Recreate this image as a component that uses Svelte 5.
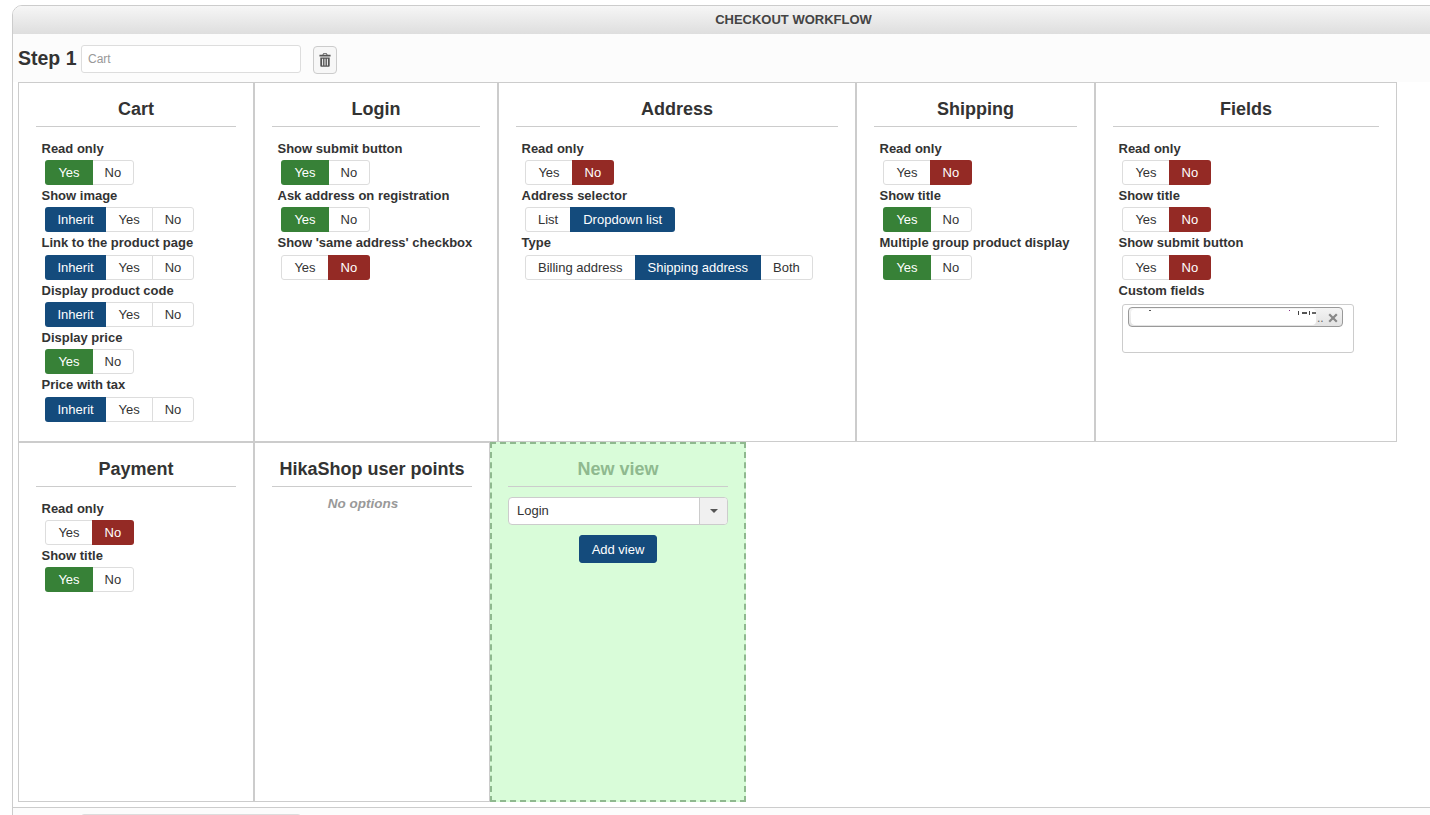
<script lang="ts">
  type Option = { label: string; tone?: "green" | "blue" | "red" };
  type Setting = { label: string; options: Option[] };
  type View = { title: string; width: number; settings?: Setting[]; chip?: boolean; empty?: boolean };

  const yes: Option = { label: "Yes", tone: "green" };
  const no: Option = { label: "No", tone: "red" };
  const plainYes: Option = { label: "Yes" };
  const plainNo: Option = { label: "No" };
  const inherit: Option = { label: "Inherit", tone: "blue" };

  const on = [yes, plainNo];
  const off = [plainYes, no];
  const inherited = [inherit, plainYes, plainNo];

  const views: View[] = [
    {
      title: "Cart",
      width: 236,
      settings: [
        { label: "Read only", options: on },
        { label: "Show image", options: inherited },
        { label: "Link to the product page", options: inherited },
        { label: "Display product code", options: inherited },
        { label: "Display price", options: on },
        { label: "Price with tax", options: inherited },
      ],
    },
    {
      title: "Login",
      width: 244,
      settings: [
        { label: "Show submit button", options: on },
        { label: "Ask address on registration", options: on },
        { label: "Show 'same address' checkbox", options: off },
      ],
    },
    {
      title: "Address",
      width: 358,
      settings: [
        { label: "Read only", options: off },
        {
          label: "Address selector",
          options: [{ label: "List" }, { label: "Dropdown list", tone: "blue" }],
        },
        {
          label: "Type",
          options: [
            { label: "Billing address" },
            { label: "Shipping address", tone: "blue" },
            { label: "Both" },
          ],
        },
      ],
    },
    {
      title: "Shipping",
      width: 239,
      settings: [
        { label: "Read only", options: off },
        { label: "Show title", options: on },
        { label: "Multiple group product display", options: on },
      ],
    },
    {
      title: "Fields",
      width: 302,
      chip: true,
      settings: [
        { label: "Read only", options: off },
        { label: "Show title", options: off },
        { label: "Show submit button", options: off },
      ],
    },
    {
      title: "Payment",
      width: 236,
      settings: [
        { label: "Read only", options: off },
        { label: "Show title", options: on },
      ],
    },
    { title: "HikaShop user points", width: 236, empty: true },
  ];
</script>

<div class="panel">
  <header class="panel-head">Checkout workflow</header>

  <div class="step-head">
    <span class="step-name">Step 1</span>
    <input class="step-input" type="text" placeholder="Cart" />
    <button type="button" class="trash" aria-label="Delete step">
      <svg width="12" height="14" viewBox="0 0 14 16" aria-hidden="true">
        <path
          fill="#555"
          fill-rule="evenodd"
          d="M5 0h4l1 2h3.5v2H.5V2H4zM5.6 1 5.2 2h3.6l-.4-1zM1.5 5h11v9.6c0 .8-.6 1.4-1.4 1.4H2.9c-.8 0-1.4-.6-1.4-1.4zM3.6 6.5v8h1.2v-8zm2.8 0v8h1.2v-8zm2.8 0v8h1.2v-8z"
        />
      </svg>
    </button>
  </div>

  <div class="views">
    {#each views as view (view.title)}
      <section class="view" style="width: {view.width}px">
        <h3>{view.title}</h3>
        {#if view.empty}
          <p class="no-options">No options</p>
        {/if}
        {#each view.settings ?? [] as setting (setting.label)}
          <div class="setting-label">{setting.label}</div>
          <div class="switch">
            {#each setting.options as option (option.label)}
              <span
                class="switch-btn {option.tone ?? ''}"
                class:wide={option.label === "Yes"}
                class:narrow={option.label === "No" || option.label === "Inherit"}>{option.label}</span>
            {/each}
          </div>
        {/each}
        {#if view.chip}
          <div class="setting-label">Custom fields</div>
          <div class="tag-box">
            <div class="chip">
              <span class="chip-blur"></span>
              <!-- what is left of the blurred-out field name -->
              <svg class="chip-marks" width="186" height="6" viewBox="0 0 186 6" aria-hidden="true">
                <rect x="18" y="1" width="2" height="1" fill="#555" />
                <rect x="158" y="1" width="1" height="1" fill="#838" />
                <rect x="167" y="2" width="1" height="4" fill="#444" />
                <rect x="171" y="3" width="5" height="2" fill="#555" />
                <rect x="178" y="2" width="1" height="4" fill="#444" />
                <rect x="181" y="3" width="4" height="2" fill="#666" />
              </svg>
              <span class="chip-text">..</span>
              <svg class="chip-x" width="10" height="10" viewBox="0 0 10 10" aria-hidden="true">
                <path d="M1.2 1.2l7.6 7.6M8.8 1.2l-7.6 7.6" stroke="#888" stroke-width="2.2" fill="none" />
              </svg>
            </div>
          </div>
        {/if}
      </section>
    {/each}

    <section class="view new-view">
      <h3>New view</h3>
      <div class="picker">
        <span class="picker-value">Login</span>
        <span class="picker-arrow"><i></i></span>
      </div>
      <button type="button" class="add-view">Add view</button>
    </section>
  </div>

  <div class="step-next">
    <input class="step-input" type="text" aria-label="Step 2" />
  </div>
</div>

<style>
  :global(html),
  :global(body) {
    height: 815px;
    overflow: hidden;
    background: #fff;
  }

  .panel {
    box-sizing: border-box;
    width: 1563px;
    margin: 5px 0 0 12px;
    border: 1px solid #ccc;
    border-radius: 10px 10px 0 0;
    background: #fff;
    color: #333;
    font-family: "Liberation Sans", Arial, sans-serif;
    font-size: 13px;
  }

  .panel-head {
    height: 28px;
    line-height: 28px;
    text-align: center;
    font-size: 13px;
    font-weight: 700;
    text-transform: uppercase;
    color: #444;
    border-radius: 9px 9px 0 0;
    background: linear-gradient(#f6f6f6, #dedede);
  }

  .step-head {
    display: flex;
    align-items: center;
    height: 48px;
    padding-left: 5px;
    background: #fcfcfc;
  }

  .step-next {
    height: 48px;
    margin-top: 5px;
    padding: 5px 0 0 68px;
    border-top: 1px solid #ccc;
    background: #fcfcfc;
  }

  .step-name {
    width: 63px;
    font-size: 19.5px;
    font-weight: 700;
  }

  .step-input {
    box-sizing: border-box;
    width: 220px;
    height: 28px;
    margin-top: 1px;
    padding: 0 6px;
    border: 1px solid #ddd;
    border-radius: 3px;
    background: #fff;
    font-family: inherit;
    font-size: 12px;
  }

  .step-input::placeholder {
    color: #999;
    opacity: 1;
  }

  .trash {
    display: flex;
    align-items: center;
    justify-content: center;
    box-sizing: border-box;
    width: 24px;
    height: 28px;
    margin: 3px 0 0 12px;
    padding: 0;
    border: 1px solid #ccc;
    border-radius: 4px;
    background: #f7f7f7;
  }

  .views {
    display: flex;
    flex-wrap: wrap;
    width: 1379px;
    margin-left: 5px;
  }

  .view {
    box-sizing: border-box;
    height: 360px;
    padding: 16px 17px 0;
    border: 1px solid #ccc;
    background: #fff;
  }

  h3 {
    margin: 0 0 11.7px;
    padding-bottom: 7px;
    border-bottom: 1px solid #ccc;
    font-size: 18px;
    line-height: 20px;
    font-weight: 700;
    text-align: center;
  }

  .setting-label {
    margin: 0.7px 0 1.3px 5.5px;
    line-height: 20px;
    font-weight: 700;
  }

  .switch {
    display: flex;
    width: fit-content;
    height: 25.33px;
    margin-left: 9px;
  }

  .switch-btn {
    box-sizing: border-box;
    display: flex;
    align-items: center;
    justify-content: center;
    height: 25px;
    margin-left: -1px;
    padding: 0 12px;
    border: 1px solid #ddd;
    background: #fff;
  }

  .switch-btn.wide {
    min-width: 48px;
  }

  .switch-btn.narrow {
    padding: 0 11.5px;
  }

  .switch-btn:first-child {
    margin-left: 0;
    border-radius: 3px 0 0 3px;
  }

  .switch-btn:last-child {
    border-radius: 0 3px 3px 0;
  }

  .switch-btn.green,
  .switch-btn.blue,
  .switch-btn.red {
    position: relative;
    border-color: transparent;
    color: #fff;
  }

  .switch-btn.green {
    background: #378137;
  }

  .switch-btn.blue {
    background: #144b7c;
  }

  .switch-btn.red {
    background: #942a25;
  }

  .tag-box {
    box-sizing: border-box;
    width: 232px;
    height: 49px;
    margin: 3px 0 0 9px;
    padding: 2px 10px 0 5px;
    border: 1px solid #ccc;
    border-radius: 3px;
  }

  .chip {
    position: relative;
    box-sizing: border-box;
    height: 20px;
    border: 1px solid #999;
    border-radius: 4px;
    background: linear-gradient(#f4f4f4, #e2e2e2);
  }

  .chip-blur {
    position: absolute;
    top: 1px;
    left: 2px;
    width: 185px;
    height: 16px;
    border-radius: 4px;
    background: #fff;
  }

  .chip-marks {
    position: absolute;
    top: 1px;
    left: 2px;
  }

  .chip-text {
    position: absolute;
    top: 0;
    left: 188px;
    font-size: 12px;
    line-height: 20px;
    color: #666;
  }

  .chip-x {
    position: absolute;
    top: 5px;
    right: 4px;
  }

  .no-options {
    margin: -4.7px 0 0;
    padding-right: 18px;
    font-size: 13.5px;
    line-height: 20px;
    text-align: center;
    font-weight: 700;
    font-style: italic;
    color: #999;
  }

  .new-view {
    width: 256px;
    border: 2px dashed #8fb98f;
    padding: 15px 16px 0;
    background: #d9fcd9;
    text-align: center;
  }

  .new-view h3 {
    margin-bottom: 10px;
    color: #8fb98f;
  }

  .picker {
    display: flex;
    box-sizing: border-box;
    height: 28px;
    border: 1px solid #ccc;
    border-radius: 4px;
    background: #fff;
    text-align: left;
  }

  .picker-value {
    flex: 1;
    padding-left: 8px;
    line-height: 26px;
  }

  .picker-arrow {
    display: flex;
    align-items: center;
    justify-content: center;
    width: 27px;
    border-left: 1px solid #ccc;
    border-radius: 0 3px 3px 0;
    background: #f0f0f0;
  }

  .picker-arrow i {
    width: 0;
    height: 0;
    border: 4px solid transparent;
    border-top-color: #555;
    border-bottom-width: 0;
  }

  .add-view {
    box-sizing: border-box;
    height: 28px;
    margin-top: 10px;
    padding: 0 11.5px;
    border: 1px solid #144b7c;
    border-radius: 3px;
    background: #144b7c;
    color: #fff;
    font-family: inherit;
    font-size: 13px;
  }
</style>
